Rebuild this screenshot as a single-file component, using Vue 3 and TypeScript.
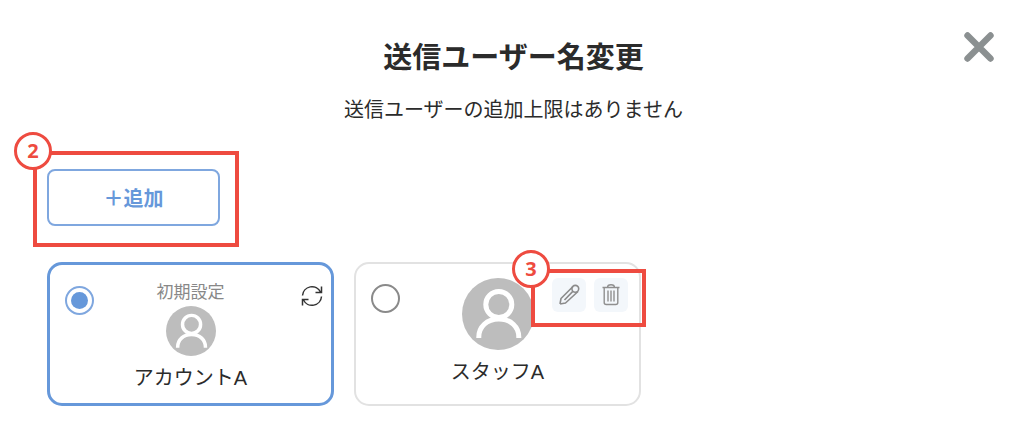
<script setup lang="ts">
import { ref } from 'vue'

interface Sender {
  id: string
  name: string
  isDefault: boolean
}

const senders: Sender[] = [
  { id: 'account-a', name: 'アカウントA', isDefault: true },
  { id: 'staff-a', name: 'スタッフA', isDefault: false },
]

const selected = ref<string>('account-a')
</script>

<template>
  <main class="dialog">
    <header class="header">
      <h1 class="title">送信ユーザー名変更</h1>
      <p class="subtitle">送信ユーザーの追加上限はありません</p>
      <button class="close" type="button" aria-label="閉じる">
        <svg viewBox="0 0 30 30" width="30" height="30">
          <path d="M3.500 3.500 26.500 26.500M26.500 3.500 3.500 26.500" fill="none" stroke="#8b9091" stroke-width="6.400" stroke-linecap="round" />
        </svg>
      </button>
    </header>

    <div class="add-area">
      <button class="add" type="button">＋追加</button>
      <div class="callout callout-add"><span class="badge">2</span></div>
    </div>

    <div class="cards">
      <section
        v-for="sender in senders"
        :key="sender.id"
        class="card"
        :class="{ selected: selected === sender.id, custom: !sender.isDefault }"
      >
        <input
          v-model="selected"
          class="radio"
          type="radio"
          name="sender"
          :id="sender.id"
          :value="sender.id"
        />
        <label class="profile" :for="sender.id">
          <span v-if="sender.isDefault" class="tag">初期設定</span>
          <svg class="avatar" viewBox="0 0 72 72">
            <circle cx="36" cy="36" r="36" fill="#bdbdbd" />
            <g fill="none" stroke="#fff" stroke-width="5">
              <circle cx="36.8" cy="26.5" r="13" />
              <path d="M16.800 60v-1c0-10 8-18 20-18s20 8 20 18v1" />
            </g>
          </svg>
          <span class="name">{{ sender.name }}</span>
        </label>
        <div class="actions">
          <button v-if="sender.isDefault" class="refresh" type="button" aria-label="更新">
            <svg viewBox="0 0 22 22" width="22" height="22" fill="none" stroke="#333" stroke-width="1.500">
              <path d="M1.500 10.500A9.500 9.500 0 0 1 19.500 7M20.500 1.500V7.500H14.500M20.500 11.500A9.500 9.500 0 0 1 2.500 15M1.500 20.500V14.500H7.500" />
            </svg>
          </button>
          <template v-else>
            <button class="tool" type="button" aria-label="編集">
              <svg viewBox="0 0 34 34" width="34" height="34" fill="none" stroke="#8b8b8b" stroke-width="1.600" stroke-linejoin="round">
                <path d="M8 26 9 20.500 21 8.500M26 13.500 13.500 25 8 26M12.500 22 20.800 13.400" />
                <circle cx="23.300" cy="10.800" r="3.400" />
              </svg>
            </button>
            <button class="tool" type="button" aria-label="削除">
              <svg viewBox="0 0 34 34" width="34" height="34" fill="none" stroke="#8f8f8f" stroke-width="1.400">
                <path d="M8.500 9.500H25.500M13.500 9.500C13.500 7 15 6.800 17 6.800S20.500 7 20.500 9.500M10.200 9.500V24.500A2 2 0 0 0 12.200 26.500H21.800A2 2 0 0 0 23.800 24.500V9.500M14 12.500V23.500M17 12.500V23.500M20 12.500V23.500" />
              </svg>
            </button>
          </template>
        </div>
        <div v-if="!sender.isDefault" class="callout callout-tools"><span class="badge">3</span></div>
      </section>
    </div>
  </main>
</template>

<style>
body {
  margin: 0;
  background: #fff;
}
</style>

<style scoped>
.dialog,
.dialog * {
  box-sizing: border-box;
}

.dialog {
  padding: 38px 44px 20px 47px;
  color: #2b2b2b;
  font-family: "Liberation Sans", "Noto Sans CJK JP", sans-serif;
  font-size: 20px;
}

button {
  padding: 0;
  border: 0;
  background: none;
  font: inherit;
  cursor: pointer;
}

svg {
  display: block;
}

.header {
  position: relative;
  text-align: center;
}

.title {
  margin: 0;
  font-size: 29px;
  line-height: 40px;
  font-weight: 700;
}

.subtitle {
  margin: 16px 0 0;
  line-height: 32px;
}

.close {
  position: absolute;
  top: -6px;
  right: -14px;
}

.add-area {
  position: relative;
  width: fit-content;
  margin-top: 43px;
}

.add {
  display: block;
  width: 173px;
  height: 57px;
  border: 2px solid #7fa7df;
  border-radius: 8px;
  background: #fff;
  color: #6698da;
  font-family: "Noto Sans CJK JP", sans-serif;
  font-weight: 700;
  line-height: 30px;
}

.callout {
  position: absolute;
  border: 4px solid #ee4b40;
  pointer-events: none;
}

.callout-add {
  inset: -18px -19px -21px -14px;
}

.callout-tools {
  top: 5px;
  right: -7px;
  width: 115px;
  height: 58px;
}

.badge {
  position: absolute;
  top: -23px;
  left: -23px;
  width: 38px;
  height: 38px;
  border: 3px solid #ee4b40;
  border-radius: 50%;
  background: #fff;
  color: #ee4b40;
  font-family: "Noto Sans", sans-serif;
  font-size: 20px;
  line-height: 32px;
  font-weight: 700;
  text-align: center;
}

.cards {
  display: grid;
  grid-template-columns: repeat(auto-fill, minmax(240px, 287px));
  gap: 20px;
  margin-top: 36px;
}

.card {
  position: relative;
  display: grid;
  grid-template-columns: 1fr auto 1fr;
  align-items: start;
  min-height: 144px;
  padding: 14px 11px 8px;
  border: 2px solid #e2e2e2;
  border-radius: 15px;
}

.card.selected {
  padding: 15px 8px 6px;
  border: 3px solid #6698da;
}

.radio {
  display: grid;
  place-items: center;
  width: 29px;
  height: 29px;
  margin: 6px 0 0 4px;
  border: 2px solid #8a8a8a;
  border-radius: 50%;
  background: #fff;
  appearance: none;
}

.radio:checked {
  margin-left: 7px;
  border-color: #7fa7df;
}

.radio:checked::before {
  width: 17px;
  height: 17px;
  border-radius: 50%;
  background: #6698da;
  content: "";
}

.profile {
  display: flex;
  flex-direction: column;
  align-items: center;
}

.tag {
  color: #888;
  font-size: 17px;
  line-height: 26px;
}

.avatar {
  width: 50px;
  height: 50px;
}

.custom .avatar {
  width: 72px;
  height: 72px;
}

.name {
  margin-top: 6px;
  line-height: 32px;
}

.actions {
  display: flex;
  justify-content: flex-end;
  gap: 8px;
}

.refresh {
  margin-top: 5px;
}

.tool {
  flex: none;
  border-radius: 6px;
  background: #f3f7fb;
}
</style>
